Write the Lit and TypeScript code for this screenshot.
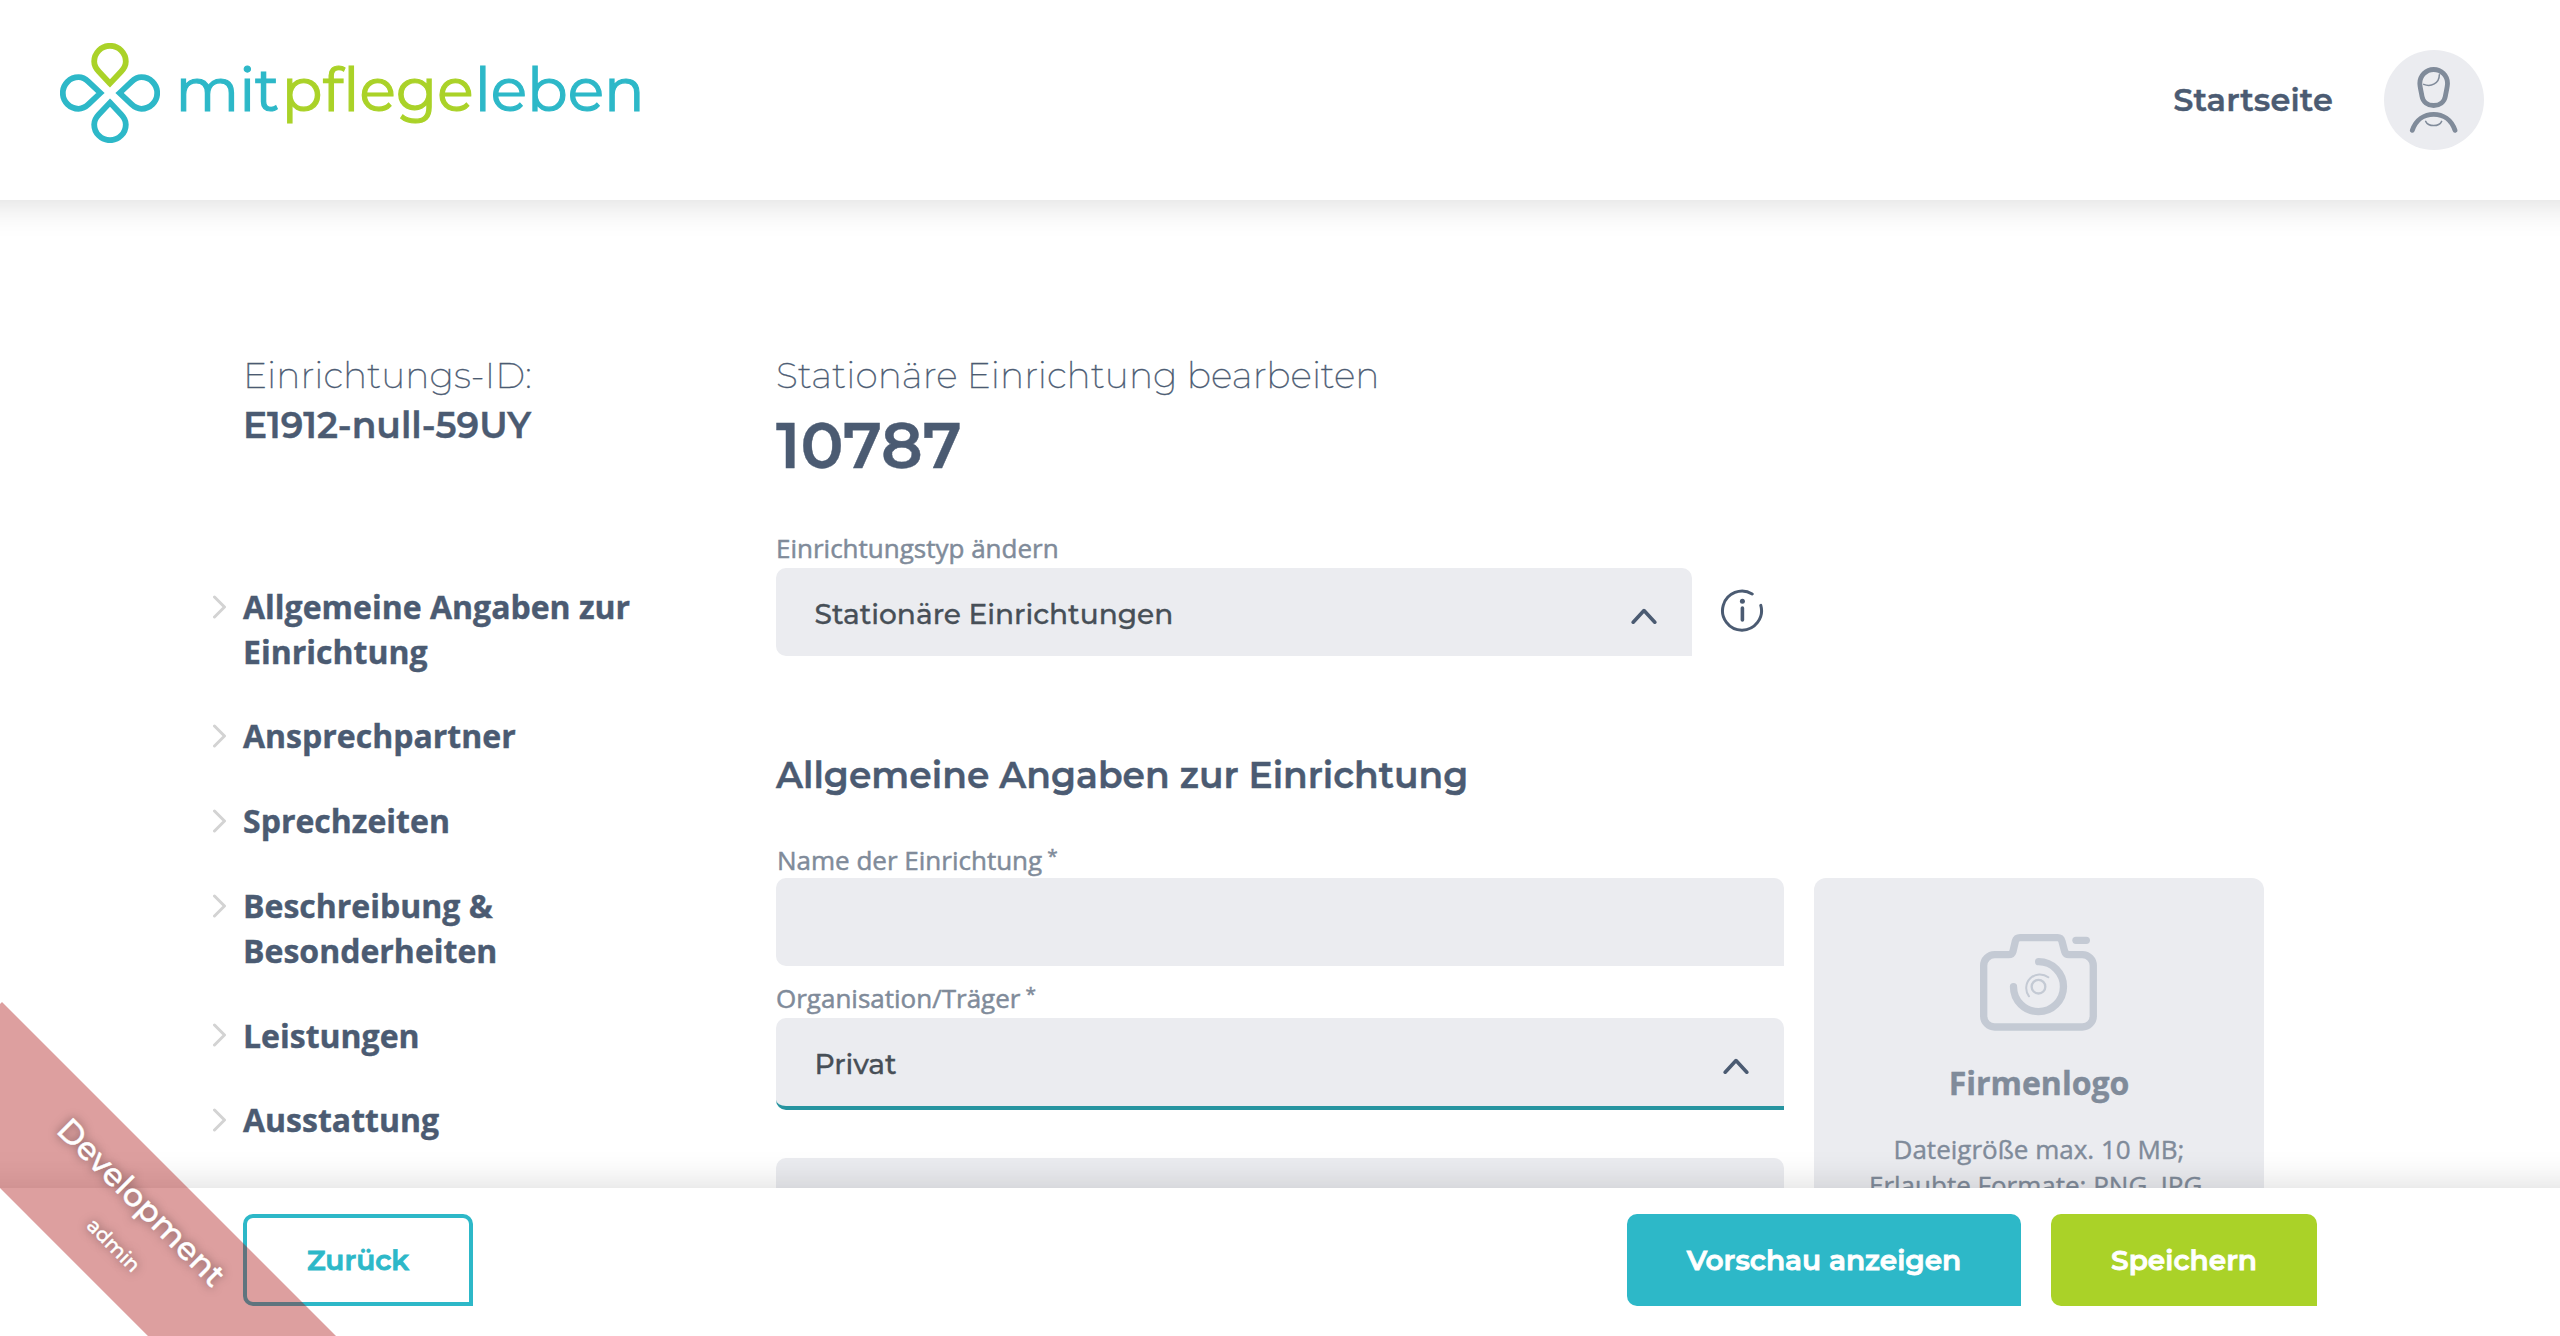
import { LitElement, html, css, nothing } from 'lit';
import { customElement, property } from 'lit/decorators.js';

const heading = css`'Montserrat', 'Inter', sans-serif`;
const copy = css`'Open Sans', 'Noto Sans', sans-serif`;

const NAV_ITEMS = [
  'Allgemeine Angaben zur Einrichtung',
  'Ansprechpartner',
  'Sprechzeiten',
  'Beschreibung & Besonderheiten',
  'Leistungen',
  'Ausstattung',
];

@customElement('brand-logo')
export class BrandLogo extends LitElement {
  static styles = css`
    :host {
      display: flex;
      align-items: flex-start;
    }
    .flower {
      width: 100px;
      height: 100px;
    }
    .petal {
      fill: none;
      stroke: #2db8c8;
      stroke-width: 5.8;
    }
    .petal.green {
      stroke: #aad228;
    }
    .name {
      margin: 10.5px 0 0 16px;
      font: 400 60px/73px ${heading};
      -webkit-text-stroke: 1.2px currentColor;
      color: #2db8c8;
      white-space: nowrap;
    }
    .name .green {
      color: #aad228;
      margin: 0 1px 0 2.5px;
      letter-spacing: 0.2px;
    }
  `;

  render() {
    const drop = 'M0 -9.6 L-11.2 -21.4 C-14.4 -24.8 -15.8 -28 -15.8 -31.4 A15.8 15.8 0 0 1 15.8 -31.4 C15.8 -28 14.4 -24.8 11.2 -21.4 Z';
    return html`
      <svg class="flower" viewBox="-50 -50 100 100">
        <path class="petal green" d=${drop} />
        <path class="petal" d=${drop} transform="rotate(90)" />
        <path class="petal" d=${drop} transform="rotate(180)" />
        <path class="petal" d=${drop} transform="rotate(270)" />
      </svg>
      <span class="name">mit<span class="green">pflege</span>leben</span>
    `;
  }
}

@customElement('form-field')
export class FormField extends LitElement {
  @property() label = '';
  @property() value = '';
  @property({ type: Boolean }) required = false;
  @property({ type: Boolean }) select = false;
  @property({ type: Boolean, reflect: true }) active = false;

  static styles = css`
    :host {
      display: block;
    }
    .label {
      display: block;
      height: 36.4px;
      padding-left: var(--label-indent, 0px);
      font: 400 26px/36.4px ${copy};
      -webkit-text-stroke: 0.5px currentColor;
      color: #808b9a;
      white-space: nowrap;
    }
    .star {
      display: inline-block;
      margin-left: 5px;
      font-size: 19px;
      line-height: 1;
      transform: translateY(-7.5px);
    }
    .box {
      display: flex;
      align-items: center;
      justify-content: space-between;
      box-sizing: border-box;
      height: 88px;
      margin-top: var(--label-gap, 0px);
      padding: 0 35px 0 38.5px;
      border-radius: 10px 10px 0 10px;
      background: #ebecf0;
      font: 500 28px/40px ${heading};
      -webkit-text-stroke: 0.3px currentColor;
      color: #474f57;
    }
    .value {
      padding-top: 4px;
    }
    :host([active]) .box {
      height: 92px;
      border-bottom: 4px solid #2694a0;
    }
    .arrow {
      width: 26px;
      height: 17px;
      margin-top: 9px;
      fill: none;
      stroke: #4b5b72;
      stroke-width: 3.6;
      stroke-linecap: round;
      stroke-linejoin: round;
    }
  `;

  render() {
    return html`
      <span class="label">${this.label}${this.required ? html`<span class="star">*</span>` : nothing}</span>
      <div class="box">
        <span class="value">${this.value}</span>
        ${this.select
          ? html`<svg class="arrow" viewBox="0 0 26 17"><path d="M2.2 14.2 L13 2.6 L23.8 14.2" /></svg>`
          : nothing}
      </div>
    `;
  }
}

@customElement('app-root')
export class AppRoot extends LitElement {
  static styles = css`
    :host {
      position: relative;
      display: grid;
      grid-template-rows: 200px 1fr 148px;
      width: 100%;
      height: 1336px;
      overflow: hidden;
      background: #fff;
      color: #4b5b72;
      -webkit-text-stroke: 0.4px currentColor;
    }
    header {
      position: relative;
      z-index: 1;
      display: flex;
      justify-content: space-between;
      align-items: flex-start;
      box-sizing: border-box;
      margin: 0 -60px;
      padding: 42.5px 136px 0 119.6px;
      background: #fff;
      box-shadow: 0 0 36px rgba(0, 0, 0, 0.16);
    }
    .account {
      display: flex;
      align-items: center;
      gap: 51px;
      margin-top: 7.5px;
    }
    .home {
      font: 600 32px/40px ${heading};
      letter-spacing: 0.12px;
      margin-top: -1px;
    }
    .avatar {
      display: block;
      width: 100px;
      height: 100px;
      border-radius: 50%;
      background: #ebecf0;
      fill: none;
      stroke: #808b9a;
      stroke-width: 14.5;
      stroke-linecap: round;
    }
    .thin {
      stroke-width: 4.5;
    }
    main {
      display: grid;
      grid-template-columns: 563px 1488px;
      min-height: 0;
      overflow: hidden;
      padding: 150px 0 0 213px;
    }
    .id {
      padding-left: 30px;
      font: 600 36px/50px ${heading};
    }
    .light {
      font: 200 36px/50px ${heading};
      letter-spacing: 0.05px;
      -webkit-text-stroke: 0.3px currentColor;
    }
    .nav {
      display: flex;
      flex-direction: column;
      gap: 40px;
      width: 460px;
      margin-top: 134px;
      font: 700 32px/44.8px ${copy};
    }
    .item {
      display: flex;
      gap: 16px;
    }
    .item-label {
      margin: 0.8px 0 -0.8px;
    }
    .marker {
      flex: none;
      width: 14px;
      height: 24px;
      margin-top: 10.5px;
      fill: none;
      stroke: #d3d3d3;
      stroke-width: 3;
      stroke-linecap: round;
      stroke-linejoin: round;
    }
    .number {
      font: 600 64px/90px ${heading};
    }
    .type-row {
      display: flex;
      align-items: flex-start;
      gap: 28px;
      margin-top: 39.6px;
    }
    .type {
      width: 916px;
      --label-gap: 2px;
    }
    .info {
      width: 44px;
      height: 44px;
      margin-top: 59.5px;
      fill: none;
      stroke: #4b5b72;
      stroke-width: 3;
      stroke-linecap: round;
    }
    .dot {
      fill: #4b5b72;
      stroke: none;
    }
    .section {
      margin-top: 94px;
      font: 600 36px/50px ${heading};
      letter-spacing: 0.03px;
    }
    .columns {
      display: grid;
      grid-template-columns: 1008px 450px;
      gap: 30px;
      margin-top: 41.6px;
    }
    .name {
      --label-indent: 1px;
    }
    .owner {
      margin-top: 13.8px;
      --label-gap: 1.8px;
    }
    .next {
      margin-top: 9.6px;
      --label-gap: 2px;
    }
    .upload {
      display: flex;
      flex-direction: column;
      align-items: center;
      box-sizing: border-box;
      height: 450px;
      margin-top: 36.4px;
      padding: 56px 30px 0;
      border-radius: 12px;
      background: #ebecf0;
      color: #808b9a;
      font: 400 26px/36.4px ${copy};
      text-align: center;
    }
    .camera {
      width: 117.3px;
      height: 97.3px;
      fill: none;
      stroke: #c4cad4;
      stroke-width: 22;
      stroke-linecap: round;
      stroke-linejoin: round;
    }
    .upload-title {
      margin: 30px 0 24.5px;
      font: 700 32px/44.8px ${copy};
    }
    footer {
      position: relative;
      z-index: 1;
      display: flex;
      align-items: flex-start;
      gap: 30px;
      box-sizing: border-box;
      margin: 0 -60px;
      padding: 26px 303px 0;
      background: #fff;
      box-shadow: 0 0 36px rgba(0, 0, 0, 0.16);
    }
    .button {
      display: flex;
      align-items: center;
      justify-content: center;
      box-sizing: border-box;
      height: 92px;
      border-radius: 10px 10px 0 10px;
      font: 600 28px/40px ${heading};
      -webkit-text-stroke: 0.8px currentColor;
      color: #fff;
    }
    .back {
      width: 230px;
      margin-right: auto;
      border: 4px solid #2db8c8;
      color: #2db8c8;
    }
    .preview {
      width: 394px;
      background: #2db8c8;
    }
    .save {
      width: 266px;
      background: #aad228;
    }
    .ribbon {
      position: absolute;
      z-index: 2;
      left: 2.2px;
      top: 1002.2px;
      box-sizing: border-box;
      width: 600px;
      height: 133px;
      padding-top: 23px;
      transform: rotate(45deg);
      transform-origin: 0 0;
      background: rgba(170, 14, 14, 0.4);
      color: #fff;
      text-shadow: 0 0 10px rgba(0, 0, 0, 0.5);
      font: 500 32px/40px ${heading};
    }
    .stage {
      padding-left: 129px;
    }
    .role {
      padding-left: 218px;
      font-size: 20px;
      line-height: 61px;
    }
  `;

  render() {
    return html`
      <header>
        <brand-logo></brand-logo>
        <div class="account">
          <span class="home">Startseite</span>
          <svg class="avatar" viewBox="24 24 300 300">
            <path d="M131.5 124 A41.5 41.5 0 0 1 214.5 124 C214.5 135 210 150 208 163 C205 180 191 190.5 173 190.5 C155 190.5 141 180 138 163 C136 150 131.5 135 131.5 124 Z" />
            <path class="thin" d="M143 127 C165 136 190 124 190 98" />
            <path d="M109 265 C120 232 146 217 173 217 C200 217 226 232 237 265" />
            <path class="thin" d="M149 238 C157 255 189 255 197 238" />
          </svg>
        </div>
      </header>

      <main>
        <aside>
          <div class="id">
            <div class="light">Einrichtungs-ID:</div>
            <div>E1912-null-59UY</div>
          </div>
          <nav class="nav">
            ${NAV_ITEMS.map(
              (item) => html`
                <div class="item">
                  <svg class="marker" viewBox="0 0 14 24"><path d="M1.5 2 L11.5 12 L1.5 22" /></svg>
                  <span class="item-label">${item}</span>
                </div>
              `
            )}
          </nav>
        </aside>

        <section>
          <div class="light">Stationäre Einrichtung bearbeiten</div>
          <div class="number">10787</div>
          <div class="type-row">
            <form-field class="type" select label="Einrichtungstyp ändern" value="Stationäre Einrichtungen"></form-field>
            <svg class="info" viewBox="0 0 44 44">
              <path d="M40.8 16.4 A19.5 19.5 0 1 1 32.2 5" />
              <circle class="dot" cx="22.4" cy="12.2" r="2.5" />
              <path d="M22.4 19 V31" stroke-width="3.6" />
            </svg>
          </div>
          <div class="section">Allgemeine Angaben zur Einrichtung</div>
          <div class="columns">
            <div>
              <form-field class="name" required label="Name der Einrichtung"></form-field>
              <form-field class="owner" required select active label=${'Organisation/Tra\u0308ger'} value="Privat"></form-field>
              <form-field class="next"></form-field>
            </div>
            <div class="upload">
              <svg class="camera" viewBox="60 57 352 292">
                <path d="M104 119 H146 Q156 119 159 109 L166 79 Q169 68 180 68 H293 Q303 68 306 79 L314 109 Q317 119 327 119 H367 A33 33 0 0 1 400 152 V303 A33 33 0 0 1 367 336 H104 A33 33 0 0 1 71 303 V152 A33 33 0 0 1 104 119 Z" />
                <path d="M348 76 H379" />
                <path d="M236 140 A75 75 0 1 1 160.500 215" />
                <path d="M265 187 A41 41 0 0 0 207 244" stroke-width="6" />
                <circle cx="235.500" cy="215" r="20.500" stroke-width="7" />
              </svg>
              <div class="upload-title">Firmenlogo</div>
              <div>Dateigröße max. 10 MB;<br />Erlaubte Formate: PNG, JPG,</div>
            </div>
          </div>
        </section>
      </main>

      <footer>
        <div class="button back">Zurück</div>
        <div class="button preview">Vorschau anzeigen</div>
        <div class="button save">Speichern</div>
      </footer>

      <div class="ribbon">
        <div class="stage">Development</div>
        <div class="role">admin</div>
      </div>
    `;
  }
}
